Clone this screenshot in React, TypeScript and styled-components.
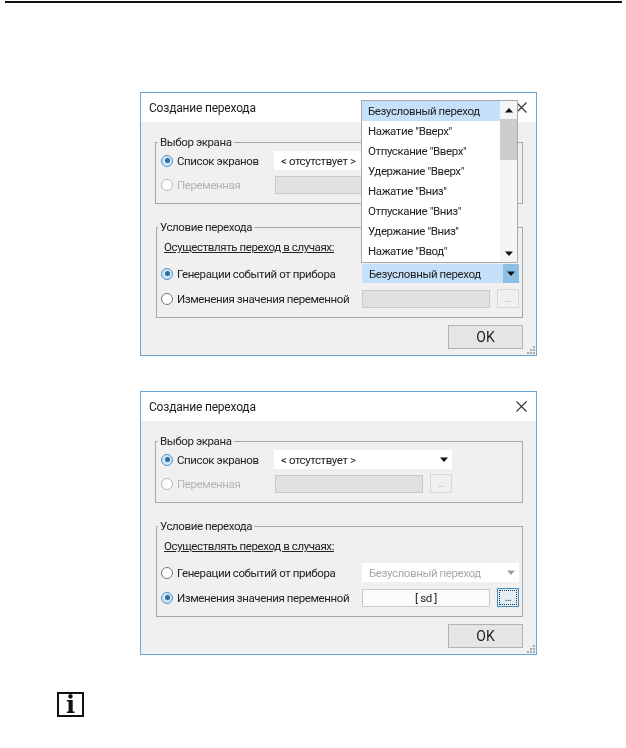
import React from "react";
import styled, { createGlobalStyle } from "styled-components";

const GlobalStyle = createGlobalStyle`
  html, body {
    margin: 0;
    padding: 0;
    background: #fff;
  }
  body {
    font-family: Roboto, "Liberation Sans", sans-serif;
    font-size: 11.5px;
    letter-spacing: -0.4px;
    color: #222;
  }
`;

const Page = styled.div`
  width: 626px;
  height: 748px;
  box-sizing: border-box;
  padding-top: 1px;
  overflow: hidden;
  display: flex;
  flex-direction: column;
`;

const TopRule = styled.div`
  height: 2px;
  margin: 0 4px 0 5px;
  background: #111;
`;

const Dialogs = styled.div`
  display: flex;
  flex-direction: column;
  gap: 35px;
  padding: 89px 0 0 140px;
`;

const Window = styled.div`
  position: relative;
  width: 397px;
  height: 264px;
  box-sizing: border-box;
  border: 1px solid #6aa6d6;
  background: #f0f0f0;
  display: flex;
  flex-direction: column;
  filter: blur(0.3px);
`;

const TitleBar = styled.div`
  height: 29px;
  flex: none;
  background: #fff;
  display: flex;
  align-items: center;
  justify-content: space-between;
  padding: 0 9px 0 8px;
  font-size: 12px;
  letter-spacing: -0.2px;
  color: #1c1c1c;
`;

const CloseIcon = styled.svg`
  width: 11px;
  height: 11px;
  stroke: #333;
  stroke-width: 1.1;
  fill: none;
`;

const Body = styled.div`
  flex: 1;
  display: flex;
  flex-direction: column;
  padding: 12px 13px 0 14px;
`;

const Group = styled.fieldset<{ $height: number; $inset?: number }>`
  margin: 0 0 0 ${(p) => p.$inset ?? 0}px;
  padding: 0 0 0 ${(p) => 5 - (p.$inset ?? 0)}px;
  min-width: 0;
  height: ${(p) => p.$height}px;
  box-sizing: border-box;
  border: 1px solid #a8a8a8;
  display: block;
  & + & {
    margin-top: 15px;
  }
`;

const Legend = styled.legend`
  margin-left: -3px;
  padding: 0 2px;
  height: 16px;
  line-height: 16px;
  color: #222;
`;

const Row = styled.div<{ $top?: number }>`
  display: flex;
  align-items: center;
  margin-top: ${(p) => p.$top ?? 0}px;
  height: 19px;
`;

const Option = styled.div<{ $width: number; $disabled?: boolean }>`
  width: ${(p) => p.$width}px;
  flex: none;
  display: flex;
  align-items: center;
  gap: 4px;
  color: ${(p) => (p.$disabled ? "#b4b4b4" : "#222")};
  white-space: nowrap;
`;

const Radio = styled.span<{ $checked?: boolean; $disabled?: boolean }>`
  width: 12px;
  height: 12px;
  flex: none;
  box-sizing: border-box;
  border-radius: 50%;
  border: 1px solid ${(p) => (p.$checked ? "#4f97cf" : p.$disabled ? "#b8b8b8" : "#777")};
  background: ${(p) => (p.$checked ? "#cfe4f5" : "#fff")};
  display: flex;
  align-items: center;
  justify-content: center;
  &::after {
    content: "";
    display: ${(p) => (p.$checked ? "block" : "none")};
    width: 5px;
    height: 5px;
    border-radius: 50%;
    background: #2a6d9e;
  }
`;

const Combo = styled.div<{ $width: number; $state?: "normal" | "active" | "disabled" }>`
  width: ${(p) => p.$width}px;
  height: 19px;
  flex: none;
  box-sizing: border-box;
  display: flex;
  align-items: center;
  justify-content: space-between;
  padding-left: 7px;
  background: ${(p) => (p.$state === "active" ? "#c5e1f9" : "#fff")};
  color: ${(p) => (p.$state === "disabled" ? "#a8a8a8" : "#222")};
  white-space: nowrap;
`;

const ComboArrow = styled.span<{ $active?: boolean }>`
  width: 16px;
  height: 100%;
  flex: none;
  display: flex;
  align-items: center;
  justify-content: center;
  background: ${(p) => (p.$active ? "#8dbfe4" : "transparent")};
`;

const Triangle = styled.svg<{ $flip?: boolean; $color?: string }>`
  width: 8px;
  height: 5px;
  fill: ${(p) => p.$color ?? "#111"};
  transform: ${(p) => (p.$flip ? "rotate(180deg)" : "none")};
`;

const Field = styled.div<{ $width: number; $filled?: boolean }>`
  width: ${(p) => p.$width}px;
  height: 18px;
  flex: none;
  box-sizing: border-box;
  border: 1px solid #c9c9c9;
  background: ${(p) => (p.$filled ? "#fbfbfb" : "#e1e1e1")};
  display: flex;
  align-items: center;
  justify-content: center;
  color: #222;
`;

const Browse = styled.div<{ $focused?: boolean }>`
  width: 22px;
  height: 19px;
  flex: none;
  margin-left: 7px;
  box-sizing: border-box;
  border: 1px solid ${(p) => (p.$focused ? "#3f8fc9" : "#d6d6d6")};
  background: ${(p) => (p.$focused ? "#e3eff8" : "#f0f0f0")};
  color: ${(p) => (p.$focused ? "#222" : "#b0b0b0")};
  font-size: 10px;
  line-height: 13px;
  display: flex;
  align-items: center;
  justify-content: center;
  padding: ${(p) => (p.$focused ? "1px" : "0")};
`;

const FocusRing = styled.span`
  flex: 1;
  align-self: stretch;
  border: 1px dotted #333;
  text-align: center;
`;

const Hint = styled.div`
  margin: 4px 0 0 3px;
  height: 16px;
  line-height: 16px;
  text-decoration: underline;
  color: #222;
`;

const Footer = styled.div`
  display: flex;
  justify-content: flex-end;
  margin-top: 7px;
`;

const OkButton = styled.div`
  width: 75px;
  height: 24px;
  box-sizing: border-box;
  border: 1px solid #b2b2b2;
  background: #e5e5e5;
  display: flex;
  align-items: center;
  justify-content: center;
  font-size: 14px;
  letter-spacing: 0;
  color: #222;
`;

const Grip = styled.svg`
  position: absolute;
  right: 0;
  bottom: 0;
  width: 10px;
  height: 10px;
  fill: #a8a8a8;
`;

const Popup = styled.div`
  position: absolute;
  left: 220px;
  top: 7px;
  width: 157px;
  height: 163px;
  box-sizing: border-box;
  border: 1px solid #a9a9a9;
  background: #fff;
  display: flex;
`;

const PopupList = styled.ul`
  flex: 1;
  list-style: none;
  margin: 0;
  padding: 0;
`;

const PopupItem = styled.li<{ $selected?: boolean }>`
  height: 20px;
  line-height: 20px;
  padding-left: 6px;
  background: ${(p) => (p.$selected ? "#c5e1f9" : "transparent")};
  color: #222;
  white-space: nowrap;
`;

const ScrollBar = styled.div`
  width: 17px;
  flex: none;
  background: #f5f5f5;
  display: flex;
  flex-direction: column;
  align-items: stretch;
`;

const ScrollButton = styled.div`
  height: 18px;
  flex: none;
  display: flex;
  align-items: center;
  justify-content: center;
`;

const ScrollThumb = styled.div`
  height: 41px;
  flex: none;
  background: #cdcdcd;
`;

const ScrollTrack = styled.div`
  flex: 1;
`;

const NoteIcon = styled.div`
  width: 27px;
  height: 25px;
  box-sizing: border-box;
  margin: 37px 0 0 57px;
  border: 2px solid #111;
  display: flex;
  align-items: center;
  justify-content: center;
  font-family: "DejaVu Serif", "Liberation Serif", serif;
  font-weight: 700;
  font-size: 24px;
  line-height: 1;
  letter-spacing: 0;
  color: #111;
  filter: blur(0.3px);
`;

const items = [
  'Безусловный переход',
  'Нажатие "Вверх"',
  'Отпускание "Вверх"',
  'Удержание "Вверх"',
  'Нажатие "Вниз"',
  'Отпускание "Вниз"',
  'Удержание "Вниз"',
  'Нажатие "Ввод"',
];

function Arrow({ flip, color }: { flip?: boolean; color?: string }) {
  return (
    <Triangle viewBox="0 0 8 5" $flip={flip} $color={color}>
      <path d="M0 0.5h8L4 5z" />
    </Triangle>
  );
}

function Dialog({ open }: { open?: boolean }) {
  return (
    <Window>
      <TitleBar>
        Создание перехода
        <CloseIcon viewBox="0 0 11 11">
          <path d="M0.5 0.5l10 10M10.5 0.5l-10 10" />
        </CloseIcon>
      </TitleBar>
      <Body>
        <Group $height={70}>
          <Legend>Выбор экрана</Legend>
          <Row $top={1}>
            <Option $width={113}>
              <Radio $checked />
              Список экранов
            </Option>
            <Combo $width={178} $state="normal">
              {"< отсутствует >"}
              <ComboArrow>
                <Arrow />
              </ComboArrow>
            </Combo>
          </Row>
          <Row $top={5}>
            <Option $width={114} $disabled>
              <Radio $disabled />
              Переменная
            </Option>
            <Field $width={148} />
            <Browse>...</Browse>
          </Row>
        </Group>
        <Group $height={99} $inset={1}>
          <Legend>Условие перехода</Legend>
          <Hint>Осуществлять переход в случаях:</Hint>
          <Row $top={9}>
            <Option $width={201}>
              <Radio $checked={open} />
              Генерации событий от прибора
            </Option>
            <Combo $width={157} $state={open ? "active" : "disabled"}>
              Безусловный переход
              <ComboArrow $active={open}>
                <Arrow color={open ? "#111" : "#a0a0a0"} />
              </ComboArrow>
            </Combo>
          </Row>
          <Row $top={6}>
            <Option $width={201}>
              <Radio $checked={!open} />
              Изменения значения переменной
            </Option>
            <Field $width={128} $filled={!open}>
              {open ? "" : "[ sd ]"}
            </Field>
            <Browse $focused={!open}>
              {open ? "..." : <FocusRing>...</FocusRing>}
            </Browse>
          </Row>
        </Group>
        <Footer>
          <OkButton>OK</OkButton>
        </Footer>
      </Body>
      <Grip viewBox="0 0 10 10">
        <path d="M7 1h2v2H7zM4 4h2v2H4zM7 4h2v2H7zM1 7h2v2H1zM4 7h2v2H4zM7 7h2v2H7z" />
      </Grip>
      {open && (
        <Popup>
          <PopupList>
            {items.map((item, i) => (
              <PopupItem key={item} $selected={i === 0}>
                {item}
              </PopupItem>
            ))}
          </PopupList>
          <ScrollBar>
            <ScrollButton>
              <Arrow flip />
            </ScrollButton>
            <ScrollThumb />
            <ScrollTrack />
            <ScrollButton>
              <Arrow />
            </ScrollButton>
          </ScrollBar>
        </Popup>
      )}
    </Window>
  );
}

export default function App() {
  return (
    <>
      <GlobalStyle />
      <Page>
        <TopRule />
        <Dialogs>
          <Dialog open />
          <Dialog />
        </Dialogs>
        <NoteIcon>i</NoteIcon>
      </Page>
    </>
  );
}
